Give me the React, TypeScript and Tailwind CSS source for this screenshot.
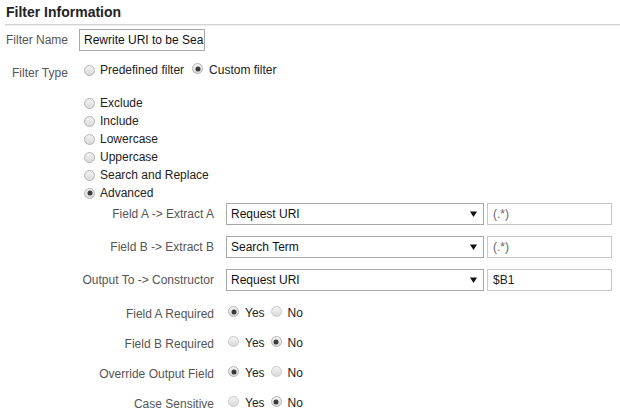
import React from "react";

function Radio({ checked, light }: { checked?: boolean; light?: boolean }) {
  return (
    <span
      className={`relative inline-block w-[11px] h-[11px] shrink-0 rounded-full border ${
        light ? "border-[#c9c9c9]" : "border-[#b3b3b3]"
      } bg-gradient-to-b from-[#f4f4f4] to-[#d9d9d9]`}
    >
      {checked && (
        <span className="absolute left-1/2 top-1/2 w-[5px] h-[5px] -translate-x-1/2 -translate-y-1/2 rounded-full bg-[#3a3a3a]" />
      )}
    </span>
  );
}

function Option({ label, checked }: { label: string; checked?: boolean }) {
  return (
    <div className="flex items-center h-[18px]">
      <Radio checked={checked} />
      <span className="ml-[5px] text-[#222]">{label}</span>
    </div>
  );
}

function Arrow() {
  return (
    <svg width="7" height="6" viewBox="0 0 7 6" className="block">
      <path d="M0 0.5 H7 L3.5 6 Z" fill="#111" />
    </svg>
  );
}

function FieldRow({
  label,
  select,
  value,
  valueDark,
}: {
  label: string;
  select: string;
  value: string;
  valueDark?: boolean;
}) {
  return (
    <div className="flex items-center h-[22px]">
      <div className="w-[214px] text-right text-[#555]">{label}</div>
      <div className="ml-[12px] w-[258px] h-[22px] border border-[#a9a9a9] flex items-center pl-[4px] pr-[6px] text-[#111]">
        <span className="flex-1">{select}</span>
        <Arrow />
      </div>
      <div
        className={`ml-[3px] w-[125px] h-[22px] border border-[#c6c6c6] flex items-center pl-[5px] ${
          valueDark ? "text-[#222]" : "text-[#666]"
        }`}
      >
        {value}
      </div>
    </div>
  );
}

function YesNo({ label, yes }: { label: string; yes: boolean }) {
  return (
    <div className="flex items-center h-[30px]">
      <div className="w-[214px] text-right text-[#555] pt-[2px]">{label}</div>
      <div className="ml-[14px]">
        <Radio checked={yes} light={!yes} />
      </div>
      <span className="ml-[6px] text-[#222]">Yes</span>
      <div className="ml-[6px]">
        <Radio checked={!yes} light={yes} />
      </div>
      <span className="ml-[6px] text-[#222]">No</span>
    </div>
  );
}

export default function App() {
  return (
    <div className="w-[620px] h-[417px] bg-white overflow-hidden font-['Liberation_Sans',Arial,sans-serif] text-[12px] leading-[14px]">
      <div className="h-[24px] pl-[6px] pt-[4px] font-bold text-[14px] leading-[16px] text-[#222]">
        Filter Information
      </div>
      <div className="ml-[5px] h-[1px] bg-[#d4d4d4]" />
      <div className="ml-[5px] h-[1px] bg-[#eeeeee]" />

      <div className="flex items-center mt-[3px] h-[22px]">
        <div className="pl-[6px] w-[79px] text-[#555]">Filter Name</div>
        <div className="w-[126px] h-[22px] border border-[#a9a9a9] flex items-center pl-[3px] overflow-hidden whitespace-nowrap text-[#111]">
          <span className="inline-block w-[1px] h-[14px] bg-black mr-[1px]" />
          Rewrite URI to be Search Term
        </div>
      </div>

      <div className="flex items-center mt-[12px] h-[14px]">
        <div className="pl-[12px] w-[84px] text-[#555] pt-[6px]">Filter Type</div>
        <Radio />
        <span className="ml-[5px] text-[#222]">Predefined filter</span>
        <span className="ml-[8px]">
          <Radio checked />
        </span>
        <span className="ml-[6px] text-[#222]">Custom filter</span>
      </div>

      <div className="pl-[84px] mt-[17px] flex flex-col">
        <Option label="Exclude" />
        <Option label="Include" />
        <Option label="Lowercase" />
        <Option label="Uppercase" />
        <Option label="Search and Replace" />
        <Option label="Advanced" checked />
      </div>

      <div className="mt-[1px] flex flex-col gap-[11px]">
        <FieldRow label="Field A -> Extract A" select="Request URI" value="(.*)" />
        <FieldRow label="Field B -> Extract B" select="Search Term" value="(.*)" />
        <FieldRow label="Output To -> Constructor" select="Request URI" value="$B1" valueDark />
      </div>

      <div className="mt-[7px] flex flex-col">
        <YesNo label="Field A Required" yes />
        <YesNo label="Field B Required" yes={false} />
        <YesNo label="Override Output Field" yes />
        <YesNo label="Case Sensitive" yes={false} />
      </div>
    </div>
  );
}
